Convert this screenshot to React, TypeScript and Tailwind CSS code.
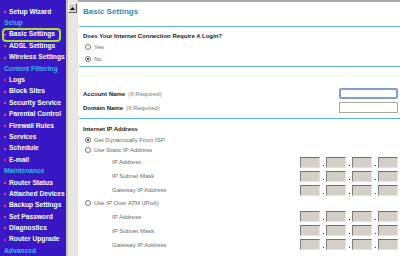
import React from "react";

type NavItem = { label: string; header?: boolean; active?: boolean };

const nav: NavItem[] = [
  { label: "Setup Wizard" },
  { label: "Setup", header: true },
  { label: "Basic Settings", active: true },
  { label: "ADSL Settings" },
  { label: "Wireless Settings" },
  { label: "Content Filtering", header: true },
  { label: "Logs" },
  { label: "Block Sites" },
  { label: "Security Service" },
  { label: "Parental Control" },
  { label: "Firewall Rules" },
  { label: "Services" },
  { label: "Schedule" },
  { label: "E-mail" },
  { label: "Maintenance", header: true },
  { label: "Router Status" },
  { label: "Attached Devices" },
  { label: "Backup Settings" },
  { label: "Set Password" },
  { label: "Diagnostics" },
  { label: "Router Upgrade" },
  { label: "Advanced", header: true },
];

function Radio({ checked }: { checked?: boolean }) {
  return (
    <span className="w-[6px] h-[6px] rounded-full border border-[#7a7a7a] bg-white flex items-center justify-center shrink-0">
      {checked && <span className="w-[2px] h-[2px] rounded-full bg-[#222]" />}
    </span>
  );
}

function IpBoxes() {
  return (
    <div className="flex items-center">
      {[0, 1, 2, 3].map((i) => (
        <React.Fragment key={i}>
          {i > 0 && (
            <span className="w-[6px] h-[11px] flex items-end justify-center pb-[2px]">
              <span className="w-[1px] h-[1px] bg-[#333]" />
            </span>
          )}
          <span className="w-[20px] h-[11px] bg-[#d4d0c8] border-t border-l border-t-[#707070] border-l-[#808080] border-b border-r border-b-[#e6e4de] border-r-[#e6e4de]" />
        </React.Fragment>
      ))}
    </div>
  );
}

function IpRow({ label, h }: { label: string; h: string }) {
  return (
    <div className={`flex items-center justify-between ${h}`}>
      <span className="pl-[29px] text-[#6a6a6a]">{label}</span>
      <IpBoxes />
    </div>
  );
}

function RadioRow({ label, checked, h }: { label: string; checked?: boolean; h: string }) {
  return (
    <div className={`flex items-center ${h} pl-[2px] gap-[3px]`}>
      <Radio checked={checked} />
      <span className="text-[#6a6a6a]">{label}</span>
    </div>
  );
}

export default function App() {
  return (
    <div
      className="w-[400px] h-[256px] flex overflow-hidden bg-white"
      style={{ fontFamily: "'Liberation Sans', Arial, sans-serif" }}
    >
      {/* Sidebar */}
      <div className="w-[66px] h-full bg-[#3718c4] pt-[6.3px] shrink-0">
        {nav.map((n) => (
          <div
            key={n.label}
            className="relative h-[11.4px] flex items-center text-[6.7px] font-bold whitespace-nowrap leading-none"
          >
            {n.header ? (
              <span className="pl-[4px] text-[#3cb4f2]">{n.label}</span>
            ) : (
              <>
                <span className="ml-[4px] mr-[3px] w-[2px] h-[2px] bg-[#ff3a78]" />
                <span className="text-white">{n.label}</span>
              </>
            )}
            {n.active && (
              <span className="absolute left-[2px] right-[5px] top-[-1px] bottom-[-1.5px] rounded-[4px] border-2 border-[#a8e02c]" />
            )}
          </div>
        ))}
      </div>

      {/* Scrollbar */}
      <div className="w-[12px] h-full bg-[#e8e6e1] border-l-2 border-[#c8c6c0] flex flex-col pt-[3px] shrink-0">
        <div className="w-[9px] h-[10px] bg-[#d4d0c8] border border-t-white border-l-white border-b-[#606060] border-r-[#606060] flex items-center justify-center">
          <svg width="5" height="3" viewBox="0 0 5 3">
            <path d="M2.5 0 L5 3 L0 3 Z" fill="#000" />
          </svg>
        </div>
      </div>

      {/* Content */}
      <div className="flex-1 h-full flex flex-col text-[6px] leading-none">
        <div className="h-[2px] bg-[#a9a9a9] shrink-0" />
        <div className="h-[20px] flex items-center pl-[5px] shrink-0">
          <span className="text-[8px] font-bold text-[#2a8db3]">Basic Settings</span>
        </div>
        <div className="h-[4px] shrink-0" />
        <div className="h-[1px] bg-[#5fb6cc] ml-[1px] shrink-0" />

        <div className="pl-[5px] pr-[2px] flex flex-col">
          <div className="h-[4px]" />
          <div className="h-[10px] flex items-center font-bold text-[#1a1a1a]">
            Does Your Internet Connection Require A Login?
          </div>
          <RadioRow label="Yes" h="h-[12px]" />
          <RadioRow label="No" checked h="h-[12px]" />
          <div className="h-[1px]" />
        </div>
        <div className="h-[1px] bg-[#5fb6cc] ml-[1px] shrink-0" />

        <div className="pl-[5px] pr-[2px] flex flex-col">
          <div className="h-[21px]" />
          <div className="h-[11px] flex items-center justify-between">
            <span>
              <span className="font-bold text-[#1a1a1a]">Account Name</span>
              <span className="text-[#777]">&nbsp; (If Required)</span>
            </span>
            <span className="w-[59px] h-[11px] rounded-[2px] border-2 border-[#7f9fd0] bg-white" />
          </div>
          <div className="h-[3px]" />
          <div className="h-[11px] flex items-center justify-between">
            <span>
              <span className="font-bold text-[#1a1a1a]">Domain Name</span>
              <span className="text-[#777]">&nbsp; (If Required)</span>
            </span>
            <span className="w-[59px] h-[11px] border border-[#a8a8a8] bg-white" />
          </div>
          <div className="h-[5px]" />
        </div>
        <div className="h-[1px] bg-[#5fb6cc] ml-[1px] shrink-0" />

        <div className="pl-[5px] pr-[2px] flex flex-col">
          <div className="h-[5px]" />
          <div className="h-[10px] flex items-center font-bold text-[#1a1a1a]">Internet IP Address</div>
          <RadioRow label="Get Dynamically From ISP" checked h="h-[11px]" />
          <RadioRow label="Use Static IP Address" h="h-[10px]" />
          <IpRow label="IP Address" h="h-[14px]" />
          <IpRow label="IP Subnet Mask" h="h-[14px]" />
          <IpRow label="Gateway IP Address" h="h-[14px]" />
          <RadioRow label="Use IP Over ATM (IPoA)" h="h-[12.5px]" />
          <IpRow label="IP Address" h="h-[14px]" />
          <IpRow label="IP Subnet Mask" h="h-[14px]" />
          <IpRow label="Gateway IP Address" h="h-[14px]" />
        </div>
      </div>
    </div>
  );
}
